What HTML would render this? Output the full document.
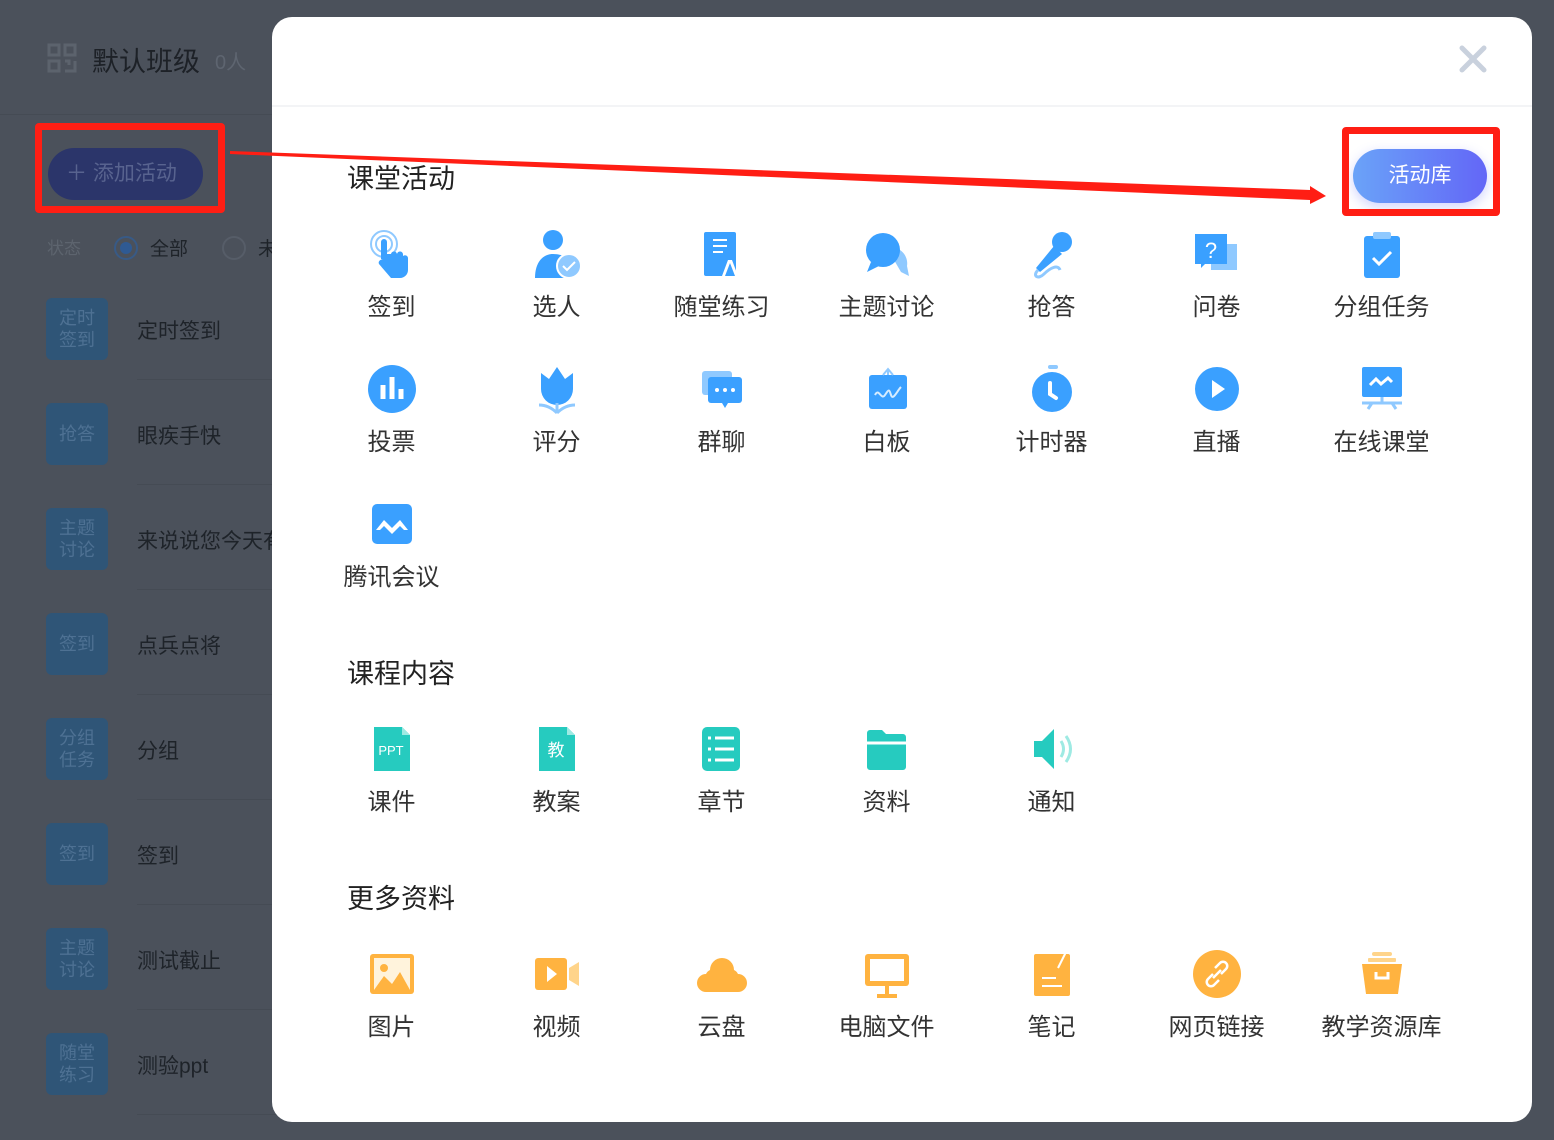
<!DOCTYPE html>
<html><head><meta charset="utf-8"><style>
*{margin:0;padding:0;box-sizing:border-box}
body{width:1554px;height:1140px;background:#4b515b;font-family:"Liberation Sans","Noto Sans CJK SC",sans-serif;position:relative;overflow:hidden}
.abs{position:absolute}
.badge{position:absolute;left:46px;width:62px;height:62px;border-radius:6px;background:#2f5577;color:#4e7193;font-size:18px;line-height:22px;text-align:center;display:flex;align-items:center;justify-content:center}
.rowt{position:absolute;left:137px;font-size:21px;color:#1e2329}
.rowl{position:absolute;left:137px;width:140px;height:1px;background:#454b54}
.modal{position:absolute;left:272px;top:17px;width:1260px;height:1105px;background:#fff;border-radius:20px}
.sec{position:absolute;font-size:27px;color:#222}
.it{position:absolute;width:165px;text-align:center}
.it svg{display:block;margin:0 auto}
.it span{display:block;font-size:24px;color:#333;margin-top:7px;white-space:nowrap}
</style></head><body>
<svg class="abs" style="left:47px;top:43px" width="30" height="30" viewBox="0 0 30 30" fill="none" stroke="#5c636d" stroke-width="3"><rect x="2" y="2" width="10" height="10"/><rect x="18" y="2" width="10" height="10"/><rect x="2" y="18" width="10" height="10"/><path d="M18 18h4v4M28 18v10h-10"/></svg>
<div class="abs" style="left:92px;top:40px;font-size:27px;color:#1d2127">默认班级</div>
<div class="abs" style="left:215px;top:46px;font-size:20px;color:#5e6570">0人</div>
<div class="abs" style="left:0;top:114px;width:272px;height:1px;background:#454b54"></div>
<div class="abs" style="left:48px;top:148px;width:155px;height:52px;border-radius:26px;background:#2b356a;color:#58638f;font-size:21px;line-height:52px;padding-left:18px">＋ 添加活动</div>
<div class="abs" style="left:35px;top:123px;width:190px;height:90px;border:7px solid #ff1e14;border-radius:4px"></div>
<div class="abs" style="left:47px;top:234px;font-size:17px;color:#5d646e">状态</div>
<div class="abs" style="left:114px;top:236px;width:24px;height:24px;border-radius:50%;border:2px solid #385a86"></div>
<div class="abs" style="left:120px;top:242px;width:12px;height:12px;border-radius:50%;background:#2f5a93"></div>
<div class="abs" style="left:150px;top:234px;font-size:19px;color:#1e2329">全部</div>
<div class="abs" style="left:222px;top:236px;width:24px;height:24px;border-radius:50%;border:2px solid #565d68"></div>
<div class="abs" style="left:258px;top:234px;font-size:19px;color:#1e2329">未</div>

<div class="badge" style="top:298px">定时<br>签到</div><div class="rowt" style="top:315px">定时签到</div><div class="rowl" style="top:379px"></div>
<div class="badge" style="top:403px">抢答</div><div class="rowt" style="top:420px">眼疾手快</div><div class="rowl" style="top:484px"></div>
<div class="badge" style="top:508px">主题<br>讨论</div><div class="rowt" style="top:525px;white-space:nowrap">来说说您今天有</div><div class="rowl" style="top:589px"></div>
<div class="badge" style="top:613px">签到</div><div class="rowt" style="top:630px">点兵点将</div><div class="rowl" style="top:694px"></div>
<div class="badge" style="top:718px">分组<br>任务</div><div class="rowt" style="top:735px">分组</div><div class="rowl" style="top:799px"></div>
<div class="badge" style="top:823px">签到</div><div class="rowt" style="top:840px">签到</div><div class="rowl" style="top:904px"></div>
<div class="badge" style="top:928px">主题<br>讨论</div><div class="rowt" style="top:945px">测试截止</div><div class="rowl" style="top:1009px"></div>
<div class="badge" style="top:1033px">随堂<br>练习</div><div class="rowt" style="top:1050px">测验ppt</div><div class="rowl" style="top:1114px"></div>

<div class="modal"></div>
<div class="abs" style="left:272px;top:105px;width:1260px;height:2px;background:#f3f4f6"></div>
<svg class="abs" style="left:1459px;top:45px" width="28" height="28" viewBox="0 0 28 28"><path d="M3 3L25 25M25 3L3 25" stroke="#c9d1dd" stroke-width="5" stroke-linecap="round"/></svg>

<div class="sec" style="left:347px;top:157px">课堂活动</div>
<div class="sec" style="left:347px;top:652px">课程内容</div>
<div class="sec" style="left:347px;top:877px">更多资料</div>

<div class="abs" style="left:1353px;top:149px;width:134px;height:54px;border-radius:27px;background:linear-gradient(90deg,#6aa3f8,#6366f7);box-shadow:0 4px 12px rgba(99,110,247,.3);color:#fff;font-size:21px;line-height:54px;text-align:center">活动库</div>
<div class="abs" style="left:1342px;top:127px;width:158px;height:89px;border:7px solid #ff1e14;border-radius:4px"></div>
<svg class="abs" style="left:0;top:0" width="1554" height="300"><polygon points="230,151 1310,190 1310,186 1326,196 1310,204 1310,200 230,154" fill="#ff1e14"/></svg>

<div class="it" style="left:309px;top:228px"><svg width="52" height="52" viewBox="0 0 52 52"><circle cx="18" cy="16" r="13" fill="none" stroke="#8fc9ff" stroke-width="2"/><circle cx="18" cy="16" r="8" fill="none" stroke="#8fc9ff" stroke-width="2"/><path d="M15 14a3 3 0 0 1 6 0v12h4a3 3 0 0 1 6 1v-1a3 3 0 0 1 6 1v1a3 3 0 0 1 5 2v12a8 8 0 0 1-8 8H25l-12-14a3 3 0 0 1 4-4l-2-1z" fill="#3aa0ff"/></svg><span>签到</span></div>
<div class="it" style="left:474px;top:228px"><svg width="52" height="52" viewBox="0 0 52 52"><circle cx="22" cy="12" r="10" fill="#3aa0ff"/><path d="M4 50c0-16 8-24 18-24s14 4 16 8v16z" fill="#3aa0ff"/><circle cx="38" cy="38" r="12" fill="#8fc9ff" stroke="#fff" stroke-width="2"/><path d="M32 38l4 4 8-8" stroke="#fff" stroke-width="2" fill="none"/></svg><span>选人</span></div>
<div class="it" style="left:639px;top:228px"><svg width="52" height="52" viewBox="0 0 52 52"><rect x="8" y="4" width="32" height="44" rx="2" fill="#3aa0ff"/><path d="M17 12h14M17 18h14M17 24h10" stroke="#fff" stroke-width="2"/><path d="M26 48l6-16h4l6 16z" fill="#fff"/><path d="M29 48l5-13 5 13" fill="#3aa0ff"/></svg><span>随堂练习</span></div>
<div class="it" style="left:804px;top:228px"><svg width="52" height="52" viewBox="0 0 52 52"><path d="M26 20a16 16 0 0 1 20 18l2 10-8-4" fill="#8fc9ff"/><circle cx="22" cy="22" r="17" fill="#3aa0ff"/><path d="M10 34l-4 10 12-6z" fill="#3aa0ff"/></svg><span>主题讨论</span></div>
<div class="it" style="left:969px;top:228px"><svg width="52" height="52" viewBox="0 0 52 52"><circle cx="36" cy="14" r="10" fill="#3aa0ff"/><path d="M28 18l-18 22 4 4 22-18z" fill="#3aa0ff"/><path d="M12 42c-6 6 0 10 6 4s14-10 16-4" stroke="#8fc9ff" stroke-width="3" fill="none"/></svg><span>抢答</span></div>
<div class="it" style="left:1134px;top:228px"><svg width="52" height="52" viewBox="0 0 52 52"><rect x="20" y="16" width="26" height="26" fill="#8fc9ff"/><path d="M4 6h32v30H14l-4 4v-4H4z" fill="#3aa0ff"/><text x="20" y="30" font-size="22" fill="#fff" text-anchor="middle" font-family="Liberation Sans">?</text></svg><span>问卷</span></div>
<div class="it" style="left:1299px;top:228px"><svg width="52" height="52" viewBox="0 0 52 52"><rect x="8" y="8" width="36" height="42" rx="3" fill="#3aa0ff"/><rect x="17" y="4" width="18" height="7" rx="2" fill="#8fc9ff"/><path d="M17 30l6 6 12-12" stroke="#fff" stroke-width="3" fill="none"/></svg><span>分组任务</span></div>
<div class="it" style="left:309px;top:363px"><svg width="52" height="52" viewBox="0 0 52 52"><circle cx="26" cy="26" r="24" fill="#3aa0ff"/><path d="M17 22v14M26 14v22M35 26v10" stroke="#fff" stroke-width="5"/></svg><span>投票</span></div>
<div class="it" style="left:474px;top:363px"><svg width="52" height="52" viewBox="0 0 52 52"><path d="M10 10l8 6 8-12 8 12 8-6v16a16 16 0 0 1-32 0z" fill="#3aa0ff"/><path d="M26 40v10M8 42c8 0 14 4 18 8M44 42c-8 0-14 4-18 8" stroke="#8fc9ff" stroke-width="3" fill="none"/></svg><span>评分</span></div>
<div class="it" style="left:639px;top:363px"><svg width="52" height="52" viewBox="0 0 52 52"><rect x="6" y="8" width="30" height="24" rx="3" fill="#8fc9ff"/><rect x="12" y="14" width="34" height="26" rx="3" fill="#3aa0ff"/><path d="M26 40l3 5 3-5z" fill="#3aa0ff"/><circle cx="21" cy="27" r="2" fill="#fff"/><circle cx="29" cy="27" r="2" fill="#fff"/><circle cx="37" cy="27" r="2" fill="#fff"/></svg><span>群聊</span></div>
<div class="it" style="left:804px;top:363px"><svg width="52" height="52" viewBox="0 0 52 52"><rect x="8" y="12" width="38" height="34" rx="3" fill="#3aa0ff"/><path d="M27 6v6M22 12l5-6 5 6" stroke="#8fc9ff" stroke-width="2" fill="none"/><path d="M14 32c4-8 6 6 10 0s4-6 6 0 6-4 10-8" stroke="#d6ecff" stroke-width="2" fill="none"/></svg><span>白板</span></div>
<div class="it" style="left:969px;top:363px"><svg width="52" height="52" viewBox="0 0 52 52"><rect x="22" y="2" width="10" height="4" rx="2" fill="#8fc9ff"/><circle cx="26" cy="29" r="20" fill="#3aa0ff"/><path d="M24 20v11l6 4" stroke="#fff" stroke-width="4" fill="none" stroke-linecap="round"/></svg><span>计时器</span></div>
<div class="it" style="left:1134px;top:363px"><svg width="52" height="52" viewBox="0 0 52 52"><circle cx="26" cy="26" r="22" fill="#3aa0ff"/><path d="M21 17l13 9-13 9z" fill="#fff"/></svg><span>直播</span></div>
<div class="it" style="left:1299px;top:363px"><svg width="52" height="52" viewBox="0 0 52 52"><rect x="6" y="4" width="40" height="30" rx="2" fill="#3aa0ff"/><path d="M14 22l6-6 5 5 7-6 4 4" stroke="#fff" stroke-width="3" fill="none"/><path d="M6 40h40M16 40l-4 6M36 40l4 6M26 34v6" stroke="#8fc9ff" stroke-width="3"/></svg><span>在线课堂</span></div>
<div class="it" style="left:309px;top:498px"><svg width="52" height="52" viewBox="0 0 52 52"><rect x="6" y="6" width="40" height="40" rx="5" fill="#3aa0ff"/><path d="M10 32l8-10 8 8 8-8 8 10-4 0-4-4-8 8-8-8-4 4z" fill="#fff"/></svg><span>腾讯会议</span></div>
<div class="it" style="left:309px;top:723px"><svg width="52" height="52" viewBox="0 0 52 52"><path d="M8 4h28l8 8v36H8z" fill="#26cbbf"/><path d="M36 4l8 8h-8z" fill="#9eeae3"/><text x="25" y="32" font-size="13" fill="#fff" text-anchor="middle" font-family="Liberation Sans">PPT</text></svg><span>课件</span></div>
<div class="it" style="left:474px;top:723px"><svg width="52" height="52" viewBox="0 0 52 52"><path d="M8 4h28l8 8v36H8z" fill="#26cbbf"/><path d="M36 4l8 8h-8z" fill="#9eeae3"/><text x="25" y="33" font-size="17" fill="#fff" text-anchor="middle" font-family="Noto Sans CJK SC">教</text></svg><span>教案</span></div>
<div class="it" style="left:639px;top:723px"><svg width="52" height="52" viewBox="0 0 52 52"><rect x="6" y="4" width="38" height="44" rx="5" fill="#26cbbf"/><path d="M12 15h3M12 26h3M12 37h3M19 15h19M19 26h19M19 37h19" stroke="#fff" stroke-width="3"/></svg><span>章节</span></div>
<div class="it" style="left:804px;top:723px"><svg width="52" height="52" viewBox="0 0 52 52"><path d="M6 10a3 3 0 0 1 3-3h12l4 4h17a3 3 0 0 1 3 3v30a3 3 0 0 1-3 3H9a3 3 0 0 1-3-3z" fill="#26cbbf"/><path d="M6 20h39" stroke="#fff" stroke-width="3"/></svg><span>资料</span></div>
<div class="it" style="left:969px;top:723px"><svg width="52" height="52" viewBox="0 0 52 52"><path d="M8 18h8l12-12v40L16 34H8z" fill="#26cbbf"/><path d="M35 18q5 8 0 16M40 13q9 13 0 26" stroke="#9eeae3" stroke-width="3" fill="none"/></svg><span>通知</span></div>
<div class="it" style="left:309px;top:948px"><svg width="52" height="52" viewBox="0 0 52 52"><rect x="4" y="6" width="44" height="40" rx="3" fill="#ffb340"/><rect x="8" y="10" width="36" height="32" fill="#fff3dc"/><circle cx="18" cy="20" r="4" fill="#ffb340"/><path d="M8 42l10-14 8 8 8-12 10 18z" fill="#ffb340"/></svg><span>图片</span></div>
<div class="it" style="left:474px;top:948px"><svg width="52" height="52" viewBox="0 0 52 52"><rect x="4" y="10" width="32" height="32" rx="3" fill="#ffb340"/><path d="M38 20l10-6v24l-10-6z" fill="#ffd48a"/><path d="M16 18l10 8-10 8z" fill="#fff"/></svg><span>视频</span></div>
<div class="it" style="left:639px;top:948px"><svg width="52" height="52" viewBox="0 0 52 52"><path d="M10 44a9 9 0 0 1 0-18 8 8 0 0 1 4-4 12 12 0 0 1 24 0 8 8 0 0 1 4 4 9 9 0 0 1 0 18z" fill="#ffb340"/></svg><span>云盘</span></div>
<div class="it" style="left:804px;top:948px"><svg width="52" height="52" viewBox="0 0 52 52"><rect x="4" y="6" width="44" height="32" rx="3" fill="#ffb340"/><rect x="9" y="11" width="34" height="22" fill="#fff"/><path d="M26 38v8M16 48h20" stroke="#ffb340" stroke-width="4"/></svg><span>电脑文件</span></div>
<div class="it" style="left:969px;top:948px"><svg width="52" height="52" viewBox="0 0 52 52"><rect x="8" y="6" width="36" height="42" rx="2" fill="#ffb340"/><path d="M16 30h14M16 38h20" stroke="#fff" stroke-width="2"/><path d="M40 4l-8 16" stroke="#fff" stroke-width="2"/></svg><span>笔记</span></div>
<div class="it" style="left:1134px;top:948px"><svg width="52" height="52" viewBox="0 0 52 52"><circle cx="26" cy="26" r="24" fill="#ffb340"/><path d="M24 20l5-5a4 4 0 0 1 6 6l-5 5M28 32l-5 5a4 4 0 0 1-6-6l5-5M22 30l8-8" stroke="#fff" stroke-width="2.5" fill="none"/></svg><span>网页链接</span></div>
<div class="it" style="left:1299px;top:948px"><svg width="52" height="52" viewBox="0 0 52 52"><rect x="16" y="4" width="20" height="4" rx="2" fill="#ffd48a"/><rect x="12" y="10" width="28" height="4" rx="1" fill="#ffd48a"/><path d="M6 16h40l-4 30H10z" fill="#ffb340"/><path d="M20 24v6h12v-6" stroke="#fff" stroke-width="3" fill="none"/></svg><span>教学资源库</span></div>
</body></html>
